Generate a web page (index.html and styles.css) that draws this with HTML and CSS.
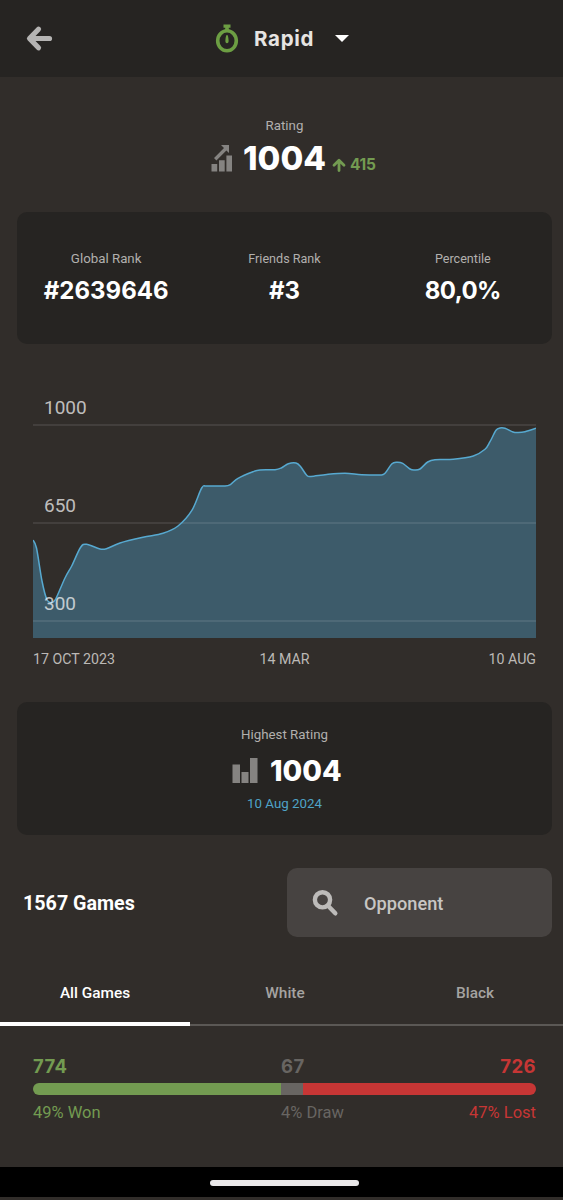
FILE: index.html
```html
<!DOCTYPE html>
<html lang="en">
<head>
    <meta charset="UTF-8">
    <meta name="viewport" content="width=device-width, initial-scale=1.0">
    <title>Rapid Stats</title>
    <link rel="stylesheet" href="styles.css">
</head>
<body>
    <header class="header">
        <svg class="back" width="28" height="28" viewBox="0 0 28 28">
            <path d="M13.500 4.200 L4.500 13.500 L13.500 22.800 M5 13.500 H24.500" />
        </svg>
        <div class="mode">
            <svg class="timer" width="24" height="30" viewBox="0 0 24 30">
                <path d="M8.500 0.500h7v3.300h-1.700v3h-3.600v-3H8.500z" />
                <ellipse cx="12" cy="16.800" rx="9.300" ry="10" />
                <path d="M12 11c1 0 1.300 2 1.600 5.200c.2 2-.5 3-1.600 3s-1.800-1-1.600-3C10.700 13 11 11 12 11z" />
            </svg>
            <span class="mode-name">Rapid</span>
            <span class="caret"></span>
        </div>
    </header>

    <section class="rating">
        <div class="label">Rating</div>
        <div class="rating-row">
            <svg class="bars" width="22" height="28" viewBox="0 0 22 28">
                <path d="M0.500 20h5.700v7.500H0.500zM8 16.300h5.700v11.200H8zM15.400 11.500h5.600v16h-5.600z" />
                <path d="M10 1h8v8l-2.600-2.600-10 10-2.400-2.300 10-10z" />
            </svg>
            <span class="big">1004</span>
            <svg class="up" width="14" height="14" viewBox="0 0 14 14">
                <path d="M7 12.500V2.500M2 7.200L7 2.200l5 5" />
            </svg>
            <span class="gain">415</span>
        </div>
    </section>

    <section class="card ranks">
        <div class="rank">
            <div class="label">Global Rank</div>
            <div class="value">#2639646</div>
        </div>
        <div class="rank">
            <div class="label small">Friends Rank</div>
            <div class="value">#3</div>
        </div>
        <div class="rank">
            <div class="label small">Percentile</div>
            <div class="value value-percent">80,0%</div>
        </div>
    </section>

    <section class="chart">
        <svg width="503" height="248" viewBox="0 0 503 248">
            <path id="area" class="area" />
            <path class="grid" d="M0 35H503M0 133H503M0 231H503" />
            <path id="line" class="line" />
            <text class="tick" x="11" y="24">1000</text>
            <text class="tick" x="11" y="122">650</text>
            <text class="tick" x="11" y="220">300</text>
        </svg>
        <div class="dates">
            <span>17 OCT 2023</span>
            <span>14 MAR</span>
            <span>10 AUG</span>
        </div>
    </section>

    <section class="card highest">
        <div class="label">Highest Rating</div>
        <div class="highest-row">
            <svg class="bars" width="26" height="26" viewBox="0 0 26 26">
                <path d="M0.500 7.500h7.500V26H0.500zM9.500 15h7V26h-7zM18 1h7.500V26H18z" />
            </svg>
            <span class="highest-value">1004</span>
        </div>
        <div class="date">10 Aug 2024</div>
    </section>

    <section class="search-row">
        <div class="games">1567 Games</div>
        <div class="search">
            <svg class="search-icon" width="28" height="28" viewBox="0 0 28 28">
                <circle cx="11.500" cy="10.800" r="7.600" />
                <path d="M17.500 17.300l6.800 7" />
            </svg>
            <span>Opponent</span>
        </div>
    </section>

    <nav class="tabs">
        <div class="tab active">All Games</div>
        <div class="tab">White</div>
        <div class="tab">Black</div>
    </nav>

    <section class="results">
        <div class="result-row counts">
            <span class="won">774</span>
            <span class="draw">67</span>
            <span class="lost">726</span>
        </div>
        <div class="result-bar">
            <div class="bar-won"></div>
            <div class="bar-draw"></div>
            <div class="bar-lost"></div>
        </div>
        <div class="result-row shares">
            <span class="won">49% Won</span>
            <span class="draw">4% Draw</span>
            <span class="lost">47% Lost</span>
        </div>
    </section>

    <footer class="navbar"><div class="handle"></div></footer>

    <script>
        const points = [
            [0, 150], [3.5, 158], [9, 191], [13.7, 209], [18.5, 212.7], [22.7, 209], [32, 188],
            [38.7, 176], [47.5, 157.5], [53.5, 154.3], [67, 159], [74, 158.5], [87, 153],
            [110, 147.3], [130, 143.3], [145, 136], [158.7, 120.7], [168.7, 98], [173.7, 96],
            [192, 96], [197.7, 94.3], [205, 88.3], [220, 81.7], [227, 80], [242, 79.7],
            [248.7, 77.7], [255.3, 73.7], [263, 73], [267.7, 76.7], [273.7, 85.3],
            [278, 86.5], [293.7, 84.5], [312, 83.3], [328.7, 84.7], [347, 85], [352, 83.3],
            [358.7, 74], [363.7, 72.2], [369.7, 73.3], [377, 79], [381.3, 80], [387, 79],
            [394.7, 72], [402, 69.7], [420.3, 69.3], [440.3, 66], [452, 59.3], [457, 51.7],
            [463, 40.3], [467, 38], [472, 38.3], [480, 42], [485.3, 42.5], [492, 41.7], [503, 38.3]
        ];

        // smooth curve through all the points
        function curve(p) {
            let d = 'M' + p[0];
            for (let i = 0; i < p.length - 1; i++) {
                const a = p[i - 1] || p[i];
                const b = p[i];
                const c = p[i + 1];
                const e = p[i + 2] || c;
                d += ' C' + [
                    b[0] + (c[0] - a[0]) / 6, b[1] + (c[1] - a[1]) / 6,
                    c[0] - (e[0] - b[0]) / 6, c[1] - (e[1] - b[1]) / 6,
                    c[0], c[1]
                ];
            }
            return d;
        }

        const path = curve(points);
        document.getElementById('line').setAttribute('d', path);
        document.getElementById('area').setAttribute('d', path + ' V248 H0 Z');
    </script>
</body>
</html>
```
FILE: styles.css
```css
* {
    box-sizing: border-box;
}
body {
    margin: 0;
    width: 563px;
    height: 1200px;
    overflow: hidden;
    background-color: #312d2a;
    font-family: Roboto, sans-serif;
    color: #fff;
}
svg {
    display: block;
    flex: none;
}
.header {
    height: 77px;
    background-color: #262422;
    display: flex;
    align-items: center;
    padding-left: 25px;
}
.back {
    fill: none;
    stroke: #b5b4b3;
    stroke-width: 5.2;
    stroke-linejoin: round;
    stroke-linecap: round;
}
.mode {
    display: flex;
    align-items: center;
    margin-left: 162px;
}
.timer {
    fill: #6c9e43;
}
.timer ellipse {
    fill: none;
    stroke: #6c9e43;
    stroke-width: 3.6;
}
.mode-name {
    width: 60px;
    margin-left: 15px;
    font: 700 20.5px Inter, sans-serif;
    letter-spacing: 0.7px;
    color: #e6e4e2;
    white-space: nowrap;
}
.caret {
    margin-left: 21px;
    border: 7px solid transparent;
    border-top-color: #fff;
    border-bottom: 0;
}
.label {
    font-size: 13.3px;
    line-height: 16px;
    color: #b2b0ae;
    text-align: center;
}
.small {
    font-size: 12.6px;
}
.rating {
    height: 135px;
    padding: 41px 0 0 6px;
}
.rating-row {
    display: flex;
    align-items: center;
    height: 40px;
    margin-top: 4px;
    padding-left: 205px;
}
.bars {
    fill: #858381;
}
.big {
    width: 82px;
    margin-left: 10px;
    font: 800 33px Inter, sans-serif;
    white-space: nowrap;
}
.up {
    margin: 13px 0 0 7px;
    fill: none;
    stroke: #739b51;
    stroke-width: 2.8;
    stroke-linecap: round;
    stroke-linejoin: round;
}
.gain {
    margin: 12px 0 0 4px;
    font: 700 15.5px Inter, sans-serif;
    letter-spacing: -0.3px;
    color: #739b51;
}
.card {
    margin: 0 11px 0 17px;
    background-color: #262422;
    border-radius: 10px;
}
.ranks {
    height: 132px;
    padding-top: 39px;
    display: flex;
}
.rank {
    flex: 1;
}
.value {
    margin-top: 8px;
    font: 700 24px/32px Inter, sans-serif;
    text-align: center;
}
.value-percent {
    letter-spacing: -0.6px;
}
.chart {
    height: 358px;
    padding: 46px 27px 0 33px;
}
.area {
    fill: #3d5b6a;
}
.grid {
    stroke: #fff;
    stroke-opacity: 0.09;
    stroke-width: 2;
}
.line {
    fill: none;
    stroke: #57a9d0;
    stroke-width: 1.5;
}
.tick {
    font-size: 19px;
    fill: #fff;
    fill-opacity: 0.7;
}
.dates {
    display: grid;
    grid-template-columns: 1fr auto 1fr;
    margin-top: 13px;
    font-size: 14.2px;
    line-height: 17px;
    color: #bcb9b6;
}
.dates span:last-child {
    text-align: right;
}
.highest {
    height: 133px;
    padding-top: 25px;
}
.highest-row {
    display: flex;
    align-items: center;
    height: 36px;
    margin-top: 9px;
    padding-left: 215px;
}
.highest-value {
    margin-left: 12px;
    font: 800 28.5px Inter, sans-serif;
}
.date {
    margin-top: 8px;
    font-size: 13.3px;
    line-height: 16px;
    color: #4fa3c7;
    text-align: center;
}
.search-row {
    display: flex;
    align-items: center;
    justify-content: space-between;
    height: 69px;
    margin: 33px 11px 0 23px;
}
.games {
    padding-top: 2px;
    font-size: 19.7px;
    font-weight: 700;
}
.search {
    display: flex;
    align-items: center;
    width: 265px;
    height: 69px;
    padding-left: 24px;
    border-radius: 10px;
    background-color: #474341;
    font-size: 18.2px;
    font-weight: 500;
    color: #c8c6c4;
}
.search span {
    padding-top: 1px;
}
.search-icon {
    margin-right: 25px;
    fill: none;
    stroke: #bdbbb9;
    stroke-width: 4.4;
    stroke-linecap: round;
}
.tabs {
    display: flex;
    height: 64px;
    margin-top: 25px;
    background: linear-gradient(#5b5855, #5b5855) 0 62px / 100% 2px no-repeat;
}
.tab {
    flex: 0 0 190px;
    height: 64px;
    padding-top: 21px;
    font-size: 15.4px;
    font-weight: 500;
    line-height: 20px;
    text-align: center;
    color: #a5a3a1;
}
.active {
    color: #fff;
    border-bottom: 4px solid #fff;
}
.results {
    height: 141px;
    padding: 29px 27px 0 33px;
}
.result-row {
    display: grid;
    grid-template-columns: 248px 1fr auto;
    line-height: 22px;
}
.counts {
    font-family: Inter, sans-serif;
    font-size: 18.5px;
    font-weight: 700;
    letter-spacing: 0.4px;
}
.shares {
    margin-top: 7px;
    font-size: 16.5px;
}
.won {
    color: #739b51;
}
.draw {
    color: #686562;
}
.lost {
    color: #c73635;
}
.result-bar {
    display: flex;
    height: 12px;
    margin-top: 6px;
    border-radius: 6px;
    overflow: hidden;
}
.bar-won {
    width: 248px;
    background-color: #739b51;
}
.bar-draw {
    width: 22px;
    background-color: #686562;
}
.bar-lost {
    flex: 1;
    background-color: #c73635;
}
.navbar {
    height: 30px;
    background-color: #000;
    padding-top: 13px;
}
.handle {
    width: 149px;
    height: 6px;
    margin: 0 auto 0 210px;
    border-radius: 3px;
    background-color: #eae8e9;
}
```
